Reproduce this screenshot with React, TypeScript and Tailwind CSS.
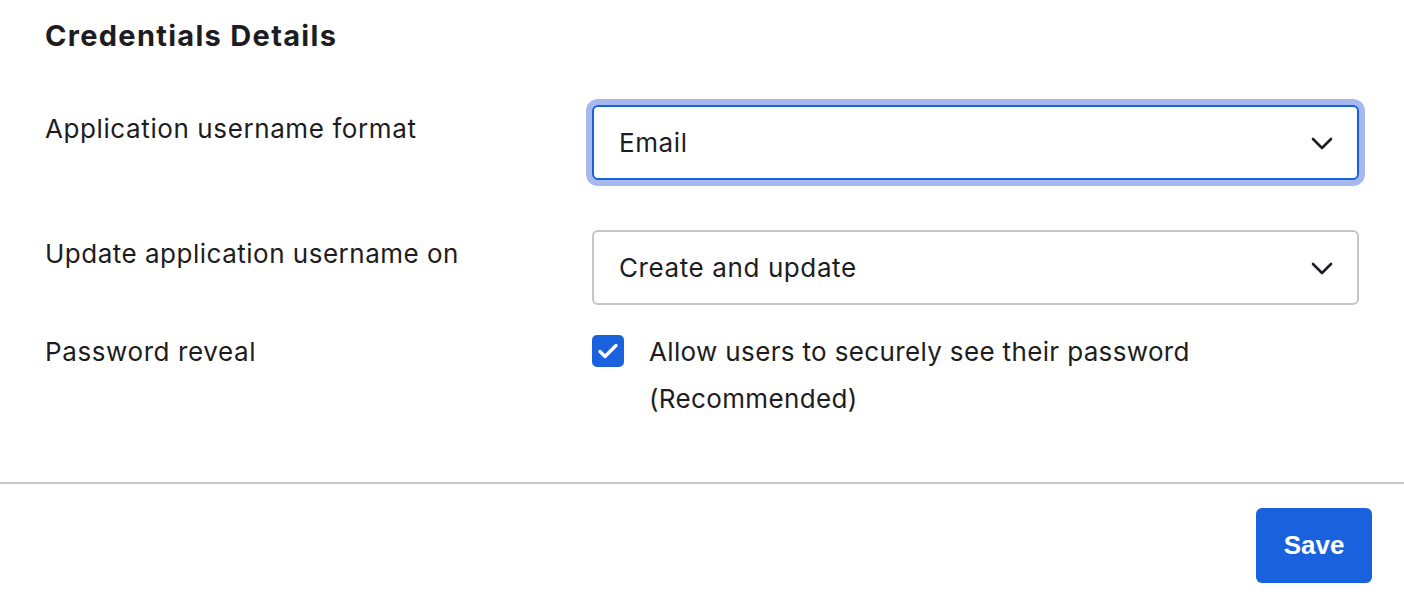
import React from 'react';

function Chevron() {
  return (
    <svg width="22" height="14" viewBox="0 0 22 14" fill="none">
      <path d="M2 3l9 9 9-9" stroke="#1d1d21" strokeWidth="2.6" strokeLinecap="round" strokeLinejoin="round" />
    </svg>
  );
}

function Select({ value, focused }: { value: string; focused?: boolean }) {
  return (
    <div
      className={
        focused
          ? 'flex h-[75px] items-center justify-between rounded-[6px] border-2 border-[#1662dd] bg-white pl-[25px] pr-[24px] shadow-[0_0_0_6px_#a7b8ee]'
          : 'flex h-[75px] items-center justify-between rounded-[6px] border-2 border-[#c6c6c6] bg-white pl-[25px] pr-[24px]'
      }
    >
      <span className="text-[26px] tracking-[0.6px] text-[#1d1d21]">{value}</span>
      <Chevron />
    </div>
  );
}

export default function App() {
  return (
    <div className="h-[592px] w-full bg-white font-['Inter',sans-serif] text-[#1d1d21]">
      <div className="px-[45px] pt-[14px]">
        <h2 className="text-[29px] font-bold leading-[44px] tracking-[1.3px]">Credentials Details</h2>
        <div className="mt-[47px] grid grid-cols-[547px_1fr] gap-y-[50px]">
          <div className="pt-[8px] text-[26px] leading-[32px] tracking-[0.6px]">Application username format</div>
          <Select value="Email" focused />
          <div className="pt-[8px] text-[26px] leading-[32px] tracking-[0.5px]">Update application username on</div>
          <Select value="Create and update" />
        </div>
        <div className="mt-[23px] grid grid-cols-[547px_1fr]">
          <div className="text-[26px] leading-[47px] tracking-[0.6px]">Password reveal</div>
          <div className="flex items-start gap-[25px]">
            <div className="mt-[7px] flex h-[32px] w-[32px] shrink-0 items-center justify-center rounded-[5px] bg-[#1a62dd]">
              <svg width="22" height="18" viewBox="0 0 22 18" fill="none">
                <path d="M3 9.5l5 5L19 3.5" stroke="white" strokeWidth="3.4" strokeLinecap="round" strokeLinejoin="round" />
              </svg>
            </div>
            <div className="w-[570px] text-[26px] leading-[47px] tracking-[0.35px]">
              Allow users to securely see their password (Recommended)
            </div>
          </div>
        </div>
      </div>
      <div className="mt-[60px] h-[2px] w-full bg-[#c8c8c8]" />
      <div className="flex justify-end px-[32px] pt-[24px]">
        <button className="h-[75px] w-[116px] rounded-[6px] bg-[#1a62dd] font-['Liberation_Sans',Arial,sans-serif] text-[26px] font-bold text-white">
          Save
        </button>
      </div>
    </div>
  );
}
